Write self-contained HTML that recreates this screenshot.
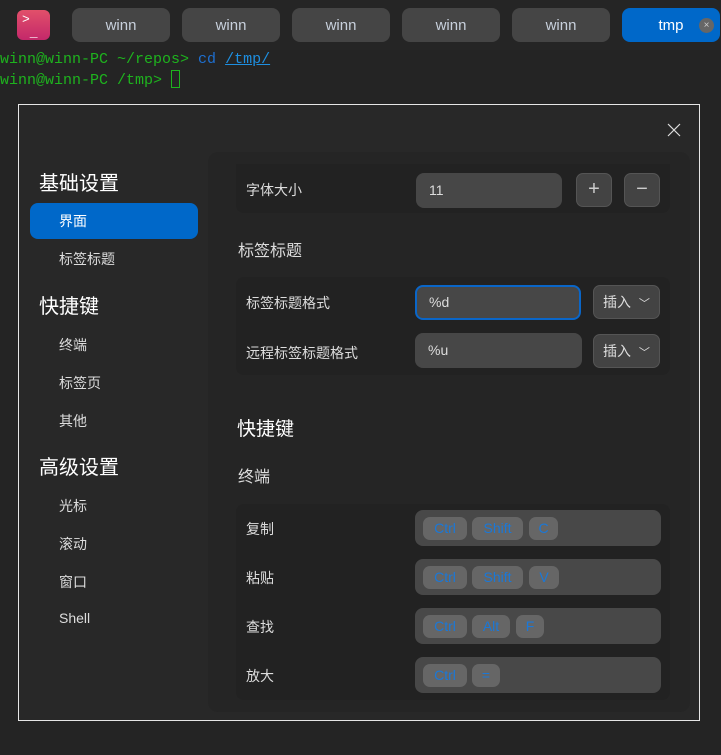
<!DOCTYPE html><html><head><meta charset="utf-8"><style>
*{margin:0;padding:0;box-sizing:border-box}
body{width:721px;height:755px;background:#242424;position:relative;overflow:hidden;font-family:"Liberation Sans","Noto Sans CJK SC",sans-serif;color:#d8d8d8}
.a{position:absolute}
.tabbar{left:0;top:0;width:721px;height:50px;background:#252525}
.tab{top:8px;height:34px;width:98px;background:#454545;border-radius:8px;color:#c8d0dc;font-size:15px;text-align:center;line-height:36px}
.term{font-family:"Liberation Mono",monospace;font-size:15px;color:#1eb31e;left:0;line-height:20px}
.dlg{left:18px;top:104px;width:682px;height:617px;background:#282828;border:1px solid #e6e6e6}
.panel{left:208px;top:152px;width:482px;height:560px;background:#252525;border-radius:10px}
.row{left:236px;width:434px;background:#222;font-size:14px;color:#ddd}
.lbl{font-size:14px;color:#ddd}
.inp{background:#474747;border-radius:8px;height:35px;color:#ddd;font-size:14px;line-height:35px;padding-left:13px}
.btn{background:#434343;border:1px solid #555;border-radius:7px}
.side{font-size:14px;color:#ddd;left:59px}
.h1{font-size:20px;color:#fff;left:39px}
.kbox{left:415px;width:246px;height:36px;background:#484848;border-radius:8px}
.key{position:absolute;top:7px;height:23px;background:#666;border-radius:7px;color:#1a78d8;font-size:14px;line-height:23px;text-align:center;white-space:nowrap}
</style></head><body>
<div class="a tabbar"></div>
<div class="a" style="left:17px;top:10px;width:33px;height:30px;border-radius:6px;background:linear-gradient(#e2506a,#c4286a);color:#fff;font-size:13px;font-family:'Liberation Mono',monospace;padding:3px 0 0 5px;line-height:13px">&gt;<br>&nbsp;_</div>
<div class="a tab" style="left:72px">winn</div>
<div class="a tab" style="left:182px">winn</div>
<div class="a tab" style="left:292px">winn</div>
<div class="a tab" style="left:402px">winn</div>
<div class="a tab" style="left:512px">winn</div>
<div class="a tab" style="left:622px;background:#0068c9;color:#fff">tmp</div>
<div class="a" style="left:699px;top:18px;width:15px;height:15px;border-radius:50%;background:#666;color:#ccc;font-size:10px;text-align:center;line-height:15px">×</div>
<div class="a term" style="top:50px">winn@winn-PC ~/repos&gt; <span style="color:#1e6fd0">cd</span> <span style="color:#1e8fe0;text-decoration:underline">/tmp/</span></div>
<div class="a term" style="top:70px">winn@winn-PC /tmp&gt; <span style="display:inline-block;width:9px;height:18px;border:1px solid #1eb31e;vertical-align:-4px"></span></div>
<div class="a dlg"></div>
<svg class="a" style="left:667px;top:123px" width="14" height="14"><path d="M1 1L13 13M13 1L1 13" stroke="#ddd" stroke-width="1.2"/></svg>
<div class="a h1" style="top:167px">基础设置</div>
<div class="a" style="left:30px;top:203px;width:168px;height:36px;background:#0068c9;border-radius:8px"></div>
<div class="a side" style="top:211px;color:#fff">界面</div>
<div class="a side" style="top:249px">标签标题</div>
<div class="a h1" style="top:290px">快捷键</div>
<div class="a side" style="top:335px">终端</div>
<div class="a side" style="top:373px">标签页</div>
<div class="a side" style="top:411px">其他</div>
<div class="a h1" style="top:451px">高级设置</div>
<div class="a side" style="top:496px">光标</div>
<div class="a side" style="top:534px">滚动</div>
<div class="a side" style="top:572px">窗口</div>
<div class="a side" style="top:610px">Shell</div>
<div class="a panel"></div>
<div class="a row" style="top:164px;height:49px;border-radius:0 0 8px 8px"></div>
<div class="a lbl" style="left:246px;top:180px">字体大小</div>
<div class="a inp" style="left:416px;top:173px;width:146px">11</div>
<div class="a btn" style="left:576px;top:173px;width:36px;height:34px;color:#ccc;text-align:center;font-size:20px;line-height:31px">+</div>
<div class="a btn" style="left:624px;top:173px;width:36px;height:34px;color:#ccc;text-align:center;font-size:20px;line-height:31px">−</div>
<div class="a" style="left:238px;top:237px;font-size:16px;color:#ddd">标签标题</div>
<div class="a row" style="top:277px;height:98px;border-radius:8px"></div>
<div class="a lbl" style="left:246px;top:293px">标签标题格式</div>
<div class="a inp" style="left:415px;top:285px;width:166px;border:2px solid #0a66c8;line-height:31px;padding-left:12px">%d</div>
<div class="a btn" style="left:593px;top:285px;width:67px;height:34px;font-size:14px;color:#ddd;line-height:32px;padding-left:9px">插入 <span style="font-size:11px;margin-left:4px">﹀</span></div>
<div class="a lbl" style="left:246px;top:343px">远程标签标题格式</div>
<div class="a inp" style="left:415px;top:333px;width:167px">%u</div>
<div class="a btn" style="left:593px;top:334px;width:67px;height:34px;font-size:14px;color:#ddd;line-height:32px;padding-left:9px">插入 <span style="font-size:11px;margin-left:4px">﹀</span></div>
<div class="a" style="left:237px;top:414px;font-size:19px;color:#fff">快捷键</div>
<div class="a" style="left:238px;top:463px;font-size:16px;color:#ddd">终端</div>
<div class="a row" style="top:504px;height:196px;border-radius:8px"></div>
<div class="a lbl" style="left:246px;top:519px">复制</div>
<div class="a kbox" style="top:510px"><div class="key" style="left:8px;width:44px">Ctrl</div><div class="key" style="left:57px;width:51px">Shift</div><div class="key" style="left:114px;width:29px">C</div></div>
<div class="a lbl" style="left:246px;top:568px">粘贴</div>
<div class="a kbox" style="top:559px"><div class="key" style="left:8px;width:44px">Ctrl</div><div class="key" style="left:57px;width:51px">Shift</div><div class="key" style="left:114px;width:30px">V</div></div>
<div class="a lbl" style="left:246px;top:617px">查找</div>
<div class="a kbox" style="top:608px"><div class="key" style="left:8px;width:44px">Ctrl</div><div class="key" style="left:57px;width:38px">Alt</div><div class="key" style="left:101px;width:28px">F</div></div>
<div class="a lbl" style="left:246px;top:666px">放大</div>
<div class="a kbox" style="top:657px"><div class="key" style="left:8px;width:44px">Ctrl</div><div class="key" style="left:57px;width:28px">=</div></div>
</body></html>
